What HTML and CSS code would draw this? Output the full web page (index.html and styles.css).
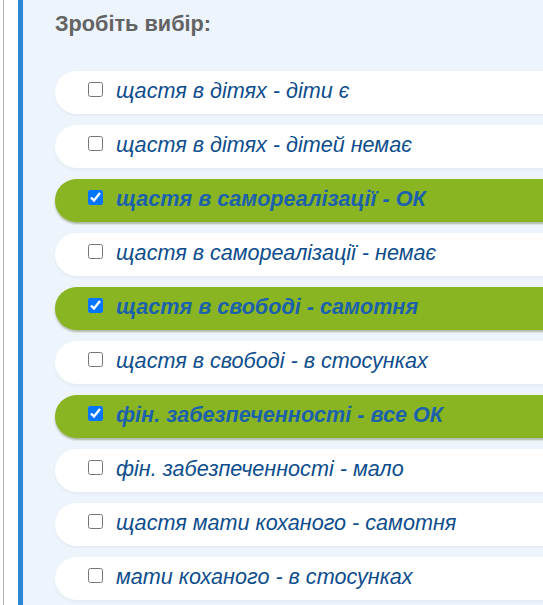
FILE: index.html
```html
<!DOCTYPE html>
<html lang="uk">
<head>
<meta charset="utf-8">
<title>Зробіть вибір</title>
<link rel="stylesheet" href="styles.css">
</head>
<body>
<div class="frame">
  <section class="panel">
    <h2 class="title">Зробіть вибір:</h2>
    <ul class="options">
      <li class="option"><label><input type="checkbox"><span>щастя в дітях - діти є</span></label></li>
      <li class="option"><label><input type="checkbox"><span>щастя в дітях - дітей немає</span></label></li>
      <li class="option is-checked"><label><input type="checkbox" checked><span>щастя в самореалізації - ОК</span></label></li>
      <li class="option"><label><input type="checkbox"><span>щастя в самореалізації - немає</span></label></li>
      <li class="option is-checked"><label><input type="checkbox" checked><span>щастя в свободі - самотня</span></label></li>
      <li class="option"><label><input type="checkbox"><span>щастя в свободі - в стосунках</span></label></li>
      <li class="option is-checked"><label><input type="checkbox" checked><span>фін. забезпеченності - все ОК</span></label></li>
      <li class="option"><label><input type="checkbox"><span>фін. забезпеченності - мало</span></label></li>
      <li class="option"><label><input type="checkbox"><span>щастя мати коханого - самотня</span></label></li>
      <li class="option"><label><input type="checkbox"><span>мати коханого - в стосунках</span></label></li>
    </ul>
  </section>
</div>
</body>
</html>
```

FILE: styles.css
```css
html, body {
  margin: 0;
  padding: 0;
  background: #ffffff;
  overflow: hidden;
  height: 100%;
}
body {
  font-family: "Liberation Sans", Arial, sans-serif;
}
.frame {
  margin-left: 3px;
  border-left: 1px solid #b4b4b4;
  padding-left: 14px;
  min-height: 100%;
}
.panel {
  border-left: 5px solid #2a87d6;
  background: #edf4fb;
  padding: 12px 0 20px 32px;
  min-height: 605px;
  box-sizing: border-box;
}
.title {
  margin: 0;
  font-size: 21.7px;
  line-height: 24px;
  font-weight: bold;
  color: #636363;
}
.options {
  list-style: none;
  margin: 35px 0 0 0;
  padding: 0;
  display: flex;
  flex-direction: column;
  gap: 11px;
  width: 560px;
}
.option {
  height: 43px;
  border-radius: 22px;
  background: #ffffff;
  box-shadow: 0 2px 3px rgba(0, 0, 0, 0.04);
  display: flex;
  align-items: center;
  padding-left: 30px;
}
.option label {
  display: flex;
  align-items: center;
  padding-bottom: 4px;
  font-style: italic;
  font-size: 21.6px;
  color: #0e4d8c;
}
.option input {
  margin: 0 13px 3px 3px;
  width: 15px;
  height: 15px;
}
.option.is-checked {
  background: #8ab522;
  box-shadow: 0 2px 2px rgba(60, 80, 0, 0.35);
}
.option.is-checked label {
  font-weight: bold;
  color: #1c61ac;
}
```
